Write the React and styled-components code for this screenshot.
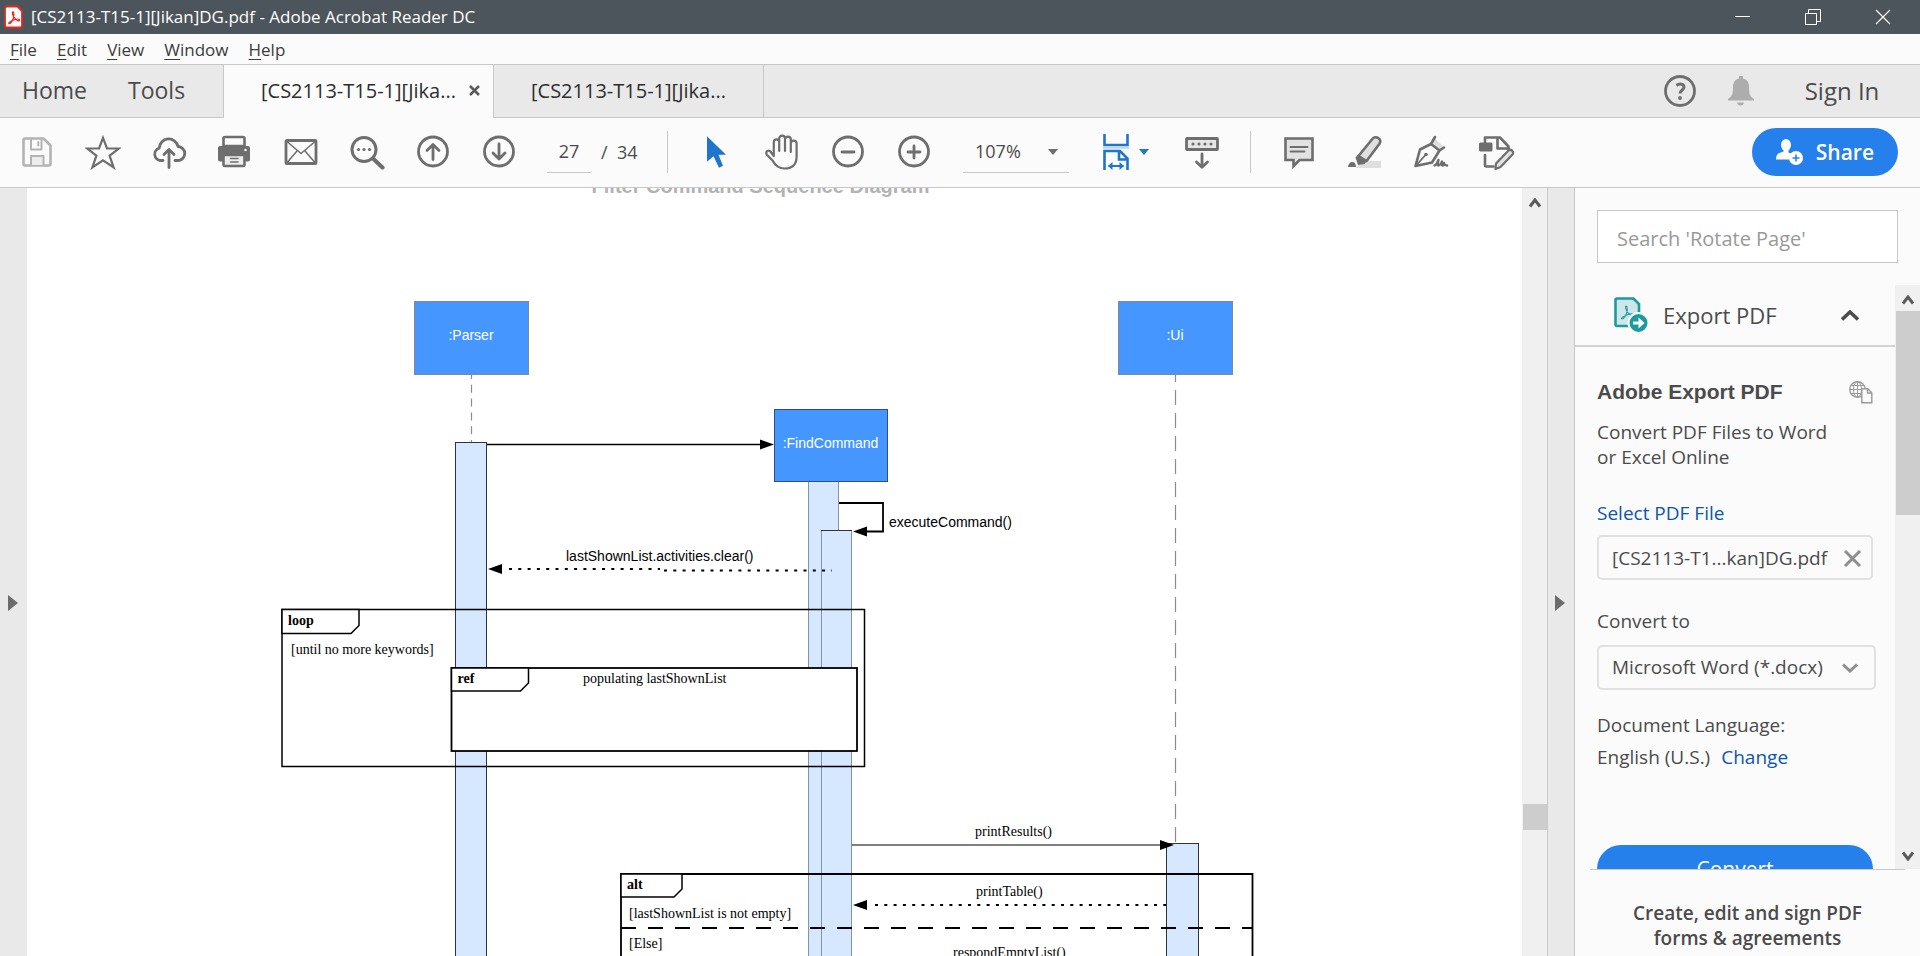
import React from "react";
import styled, { createGlobalStyle } from "styled-components";

const UI_FONT = '"Open Sans", "Noto Sans", sans-serif';
const ARIAL = '"Liberation Sans", Arial, sans-serif';
const TIMES = '"Liberation Serif", "Times New Roman", serif';

const GlobalStyle = createGlobalStyle`
  *, *::before, *::after { box-sizing: border-box; }
  html, body { margin: 0; height: 100%; overflow: hidden; }
  body { font-family: ${UI_FONT}; color: #4b4b4b; background: #fbfbfb; }
  button, input, select {
    font: inherit; color: inherit; margin: 0; padding: 0;
    border: 0; border-radius: 0; background: none; outline: none;
  }
  a { color: #0d55ae; text-decoration: none; }
  svg { display: block; flex: none; }
`;

const Window = styled.div`
  display: flex;
  flex-direction: column;
  height: 100vh;
  overflow: hidden;
`;

/* ---------- title bar ---------- */

const TitleBar = styled.header`
  display: flex;
  align-items: center;
  flex: none;
  height: 34px;
  padding: 0 2px 0 4px;
  background: #4c555b;
  color: #fff;
`;

const WindowTitle = styled.h1`
  flex: 1;
  margin: 0 0 0 8px;
  font-size: 17px;
  line-height: 24px;
  font-weight: 400;
  white-space: nowrap;
`;

const WindowButton = styled.button`
  display: flex;
  justify-content: center;
  align-items: center;
  width: 70px;
  height: 34px;
`;

/* ---------- menu bar ---------- */

const MenuBar = styled.nav`
  display: flex;
  align-items: center;
  flex: none;
  gap: 20px;
  height: 31px;
  padding: 2px 0 0 10px;
  border-bottom: 1px solid #c8c8c8;
`;

const MenuItem = styled.button`
  font-size: 17px;
  line-height: 24px;
  color: #3c3c3c;
  &::first-letter {
    text-decoration: underline;
    text-underline-offset: 3px;
  }
`;

/* ---------- document tabs ---------- */

const TabBar = styled.div`
  display: flex;
  flex: none;
  height: 53px;
  background: #e9e9e9;
  box-shadow: inset 0 -1px #c8c8c8;
`;

const HomeTabs = styled.nav`
  display: flex;
  align-items: center;
  gap: 41px;
  width: 224px;
  padding: 0 0 4px 22px;
  border-right: 1px solid #c8c8c8;
`;

const HomeTab = styled.button`
  font-size: 23px;
  line-height: 30px;
`;

const DocTab = styled.div`
  display: flex;
  align-items: center;
  gap: 13px;
  width: 270px;
  padding: 0 0 2px 37px;
  border-right: 1px solid #c8c8c8;
  background: ${(p) => (p.$active ? "#fbfbfb" : "transparent")};
`;

const DocTabName = styled.button`
  font-size: 20px;
  line-height: 28px;
  color: #2d2d2d;
  white-space: nowrap;
`;

const AccountArea = styled.div`
  display: flex;
  align-items: center;
  gap: 30px;
  margin-left: auto;
  padding: 0 38px 2px 0;
`;

const SignIn = styled.button`
  min-width: 80px;
  margin-left: 18px;
  font-size: 24px;
  line-height: 30px;
  font-weight: 500;
  white-space: nowrap;
`;

/* ---------- toolbar ---------- */

const Toolbar = styled.div`
  display: flex;
  align-items: center;
  flex: none;
  height: 70px;
  padding: 0 22px 2px 4px;
  border-bottom: 1px solid #c8c8c8;
`;

const ToolGroup = styled.div`
  display: flex;
  align-items: center;
`;

const ToolButton = styled.button`
  display: flex;
  justify-content: center;
  align-items: center;
  width: 66px;
  height: 48px;
`;

const PageBox = styled.label`
  display: flex;
  align-items: center;
  height: 42px;
  margin-left: 15px;
  font-size: 18px;
  line-height: 24px;
`;

const PageInput = styled.input`
  width: 44px;
  height: 42px;
  margin-right: 10px;
  border-bottom: 1px solid #c8c8c8;
  text-align: center;
`;

const PageTotal = styled.span`
  width: 51px;
  white-space: pre;
`;

const Divider = styled.span`
  width: 1px;
  height: 42px;
  margin: 0 15px;
  background: #c8c8c8;
`;

const SelectWrap = styled.div`
  display: grid;
  align-items: center;
  > * { grid-area: 1 / 1; }
  > svg { justify-self: end; pointer-events: none; margin-right: ${(p) => p.$inset}px; }
`;

const ZoomSelect = styled.select`
  appearance: none;
  width: 106px;
  height: 42px;
  padding-left: 12px;
  border-bottom: 1px solid #c8c8c8;
  font-size: 18px;
`;

const ZoomWrap = styled(SelectWrap)`
  margin: 0 34px 0 16px;
`;

const FitButton = styled(ToolButton)`
  justify-content: flex-start;
  gap: 10px;
  width: 66px;
`;

const ShareButton = styled.button`
  display: flex;
  align-items: center;
  gap: 13px;
  height: 48px;
  margin-left: auto;
  padding: 0 24px;
  border-radius: 24px;
  background: #2680eb;
  color: #fff;
  font-size: 21px;
  line-height: 28px;
  font-weight: 600;
`;

/* ---------- workspace ---------- */

const Workspace = styled.main`
  display: flex;
  flex: 1;
  min-height: 0;
`;

const SideHandle = styled.button`
  display: flex;
  align-items: center;
  justify-content: center;
  flex: none;
  width: 27px;
  padding: 62px 2px 0 0;
  background: #e9e9e9;
  ${(p) =>
    p.$bordered &&
    "width: 28px; border-left: 1px solid #c8c8c8; border-right: 1px solid #c8c8c8;"}
`;

const DocumentView = styled.section`
  display: flex;
  flex-direction: column;
  align-items: center;
  flex: 1;
  min-width: 0;
  padding-right: 28px;
  overflow: hidden;
  background: #fff;
`;

const PageHeading = styled.h2`
  flex: none;
  margin: -14px 0 0;
  font: 700 20px/24px ${ARIAL};
  color: #b3b3b3;
`;

const ScrollTrack = styled.div`
  display: flex;
  flex-direction: column;
  align-items: center;
  justify-content: space-between;
  flex: none;
  width: 25px;
  padding: 10px 0 8px;
  background: #f0f0f0;
`;

const ScrollThumb = styled.span`
  width: 24px;
  height: ${(p) => p.$size}px;
  margin-top: ${(p) => p.$offset}px;
  margin-bottom: auto;
  background: #cdcdcd;
`;

/* ---------- tools panel ---------- */

const Panel = styled.aside`
  display: flex;
  flex-direction: column;
  flex: none;
  width: 345px;
`;

const SearchInput = styled.input`
  flex: none;
  height: 53px;
  margin: 22px 22px;
  padding: 4px 19px 0;
  border: 1px solid #c8c8c8;
  background: #fff;
  font-size: 20px;
  &::placeholder { color: #999; opacity: 1; }
`;

const PanelScroller = styled.div`
  display: flex;
  flex: 1;
  min-height: 0;
  overflow: hidden;
`;

const PanelContent = styled.div`
  flex: 1;
  min-width: 0;
`;

const SectionHeader = styled.button`
  display: flex;
  align-items: center;
  width: 100%;
  height: 62px;
  padding: 0 36px 0 39px;
  border-bottom: 2px solid #d3d3d3;
  text-align: left;
`;

const SectionTitle = styled.span`
  flex: 1;
  margin-left: 15px;
  font-size: 22px;
  line-height: 30px;
`;

const ExportForm = styled.form`
  display: flex;
  flex-direction: column;
  padding: 31px 22px 0 22px;
  font-size: 19px;
  line-height: 25px;
`;

const FormTitle = styled.h3`
  display: flex;
  justify-content: space-between;
  align-items: center;
  margin: 0 0 14px;
  font: 700 21px/28px ${ARIAL};
`;

const Paragraph = styled.p`
  margin: 0 0 31px;
`;

const FieldBox = styled.div`
  display: flex;
  justify-content: space-between;
  align-items: center;
  height: 45px;
  margin: 9px 0 29px;
  padding: 1px 10px 0 13px;
  border: 2px solid #e1e1e1;
  border-radius: 5px;
`;

const IconButton = styled.button`
  display: flex;
`;

const FormatWrap = styled(SelectWrap)`
  margin: 11px -3px 23px 0;
`;

const FormatSelect = styled.select`
  appearance: none;
  width: 100%;
  height: 45px;
  padding-left: 13px;
  border: 2px solid #e1e1e1;
  border-radius: 5px;
`;

const LanguageRow = styled.div`
  display: flex;
  gap: 11px;
  margin: 7px 0 75px;
`;

const ConvertButton = styled.button`
  height: 48px;
  border-radius: 24px;
  background: #2680eb;
  color: #fff;
  font-size: 21px;
`;

const PanelFooter = styled.p`
  flex: none;
  height: 87px;
  margin: 0 15px;
  padding-top: 31px;
  border-top: 1px solid #c8c8c8;
  text-align: center;
  font-size: 19px;
  line-height: 25px;
  font-weight: 600;
`;

/* ---------- icons ---------- */

const GREY = "#6e6e6e";
const BLUE = "#1f75cb";

const Icon = ({ size = 36, color = GREY, width = 3, children }) => (
  <svg width={size} height={size} viewBox={`0 0 ${size} ${size}`} fill="none" stroke={color}
    strokeWidth={width} strokeLinejoin="round" strokeLinecap="round" aria-hidden="true">
    {children}
  </svg>
);

const SaveIcon = () => (
  <Icon color="#b3b3b3" width={2.6}>
    <path d="M4.5 6q0-1.5 1.5-1.5h18.5l7 7V30q0 1.500-1.500 1.500H6Q4.500 31.500 4.500 30z" />
    <path d="M12 5v10.500h10.500V5M19.300 8v3.500" strokeWidth="2" />
    <path d="M12 31v-9h12.500v9" fill="#ececec" strokeWidth="2" />
  </Icon>
);
const StarIcon = () => (
  <Icon width={2.2}>
    <path strokeLinejoin="miter" d="M18 3.800l4 10.700h11.800l-9.200 7.200 4 11.700L18 26.400 7.400 33.400l4-11.700L2.200 14.500H14z" />
  </Icon>
);
const CloudIcon = () => (
  <Icon width={2.8}>
    <path d="M12 26.500H9.500A6.300 6.300 0 0 1 8.200 14.200 9.500 9.500 0 0 1 27 12.500a7 7 0 0 1-.5 14H24" />
    <path d="M18 33.500V17M13 20.500l5-5 5 5" />
  </Icon>
);
const PrintIcon = () => (
  <Icon width={2.6}>
    <g transform="translate(-1)">
      <rect x="2" y="12" width="32" height="15.500" rx="2" fill={GREY} stroke="none" />
      <path d="M7.500 12V4.500q0-1.500 1.500-1.500h18q1.500 0 1.500 1.500V12z" fill="#fbfbfb" />
      <path d="M7.500 21h21v9.500q0 1.500-1.500 1.500H9q-1.500 0-1.500-1.500z" fill="#ededed" />
      <path d="M14.500 24.500h7.500M14.500 28h7.500" strokeWidth="1.500" />
      <circle cx="29.500" cy="16" r="1.200" fill="#fff" stroke="none" />
    </g>
  </Icon>
);
const MailIcon = () => (
  <Icon width={2.8}>
    <rect x="3" y="6.500" width="30" height="23" rx=".8" />
    <path d="M4.500 8L18 19.500 31.500 8M4.500 28l9.500-11M31.500 28L22 17" strokeWidth="1.500" />
  </Icon>
);
const FindIcon = () => (
  <Icon width={3}>
    <circle cx="15" cy="15.500" r="12" />
    <path d="M24 24.500l9.500 9" strokeWidth="4" />
    {[9.5, 15, 20.5].map((x) => (
      <circle key={x} cx={x} cy="15.500" r="1.600" fill={GREY} stroke="none" />
    ))}
  </Icon>
);
const Ring = ({ children }) => (
  <Icon width={2.8}>
    <circle cx="18" cy="17.500" r="14.500" />
    {children}
  </Icon>
);
const UpIcon = () => <Ring><path d="M18 25.500V11M12 16.500l6-6 6 6" /></Ring>;
const DownIcon = () => <Ring><path d="M18 10v14.500M12 19l6 6 6-6" /></Ring>;
const MinusIcon = () => <Ring><path d="M12 18h12" /></Ring>;
const PlusIcon = () => <Ring><path d="M12 18h12M18 12v12" /></Ring>;
const CursorIcon = () => (
  <Icon color="none"><path fill={BLUE} d="M9 2.200v25.500l6.500-5.500 5.500 11.500 4-2-4.500-11H28z" /></Icon>
);
const HandIcon = () => (
  <Icon width={2.2}>
    <path d="M9.800 22V8a2.700 2.700 0 0 1 5.400 0v9M15.200 17V4.500a2.900 2.900 0 0 1 5.800 0V17M21 17V5.500a2.900 2.900 0 0 1 5.800 0V18M26.800 18V9.500a2.900 2.900 0 0 1 5.800 0v13c0 8-4.500 12-12 12-6.500 0-9.500-3-12-8L2.600 20.500c-1.300-3.500 2-5 4.200-2.500l3 4" />
  </Icon>
);
const FitIcon = () => (
  <svg width="26" height="36" viewBox="0 0 26 36" fill="none" stroke={BLUE} strokeWidth="2.600" aria-hidden="true">
    <path d="M1.500 0v11h23V0" />
    <path d="M0 13.800h26" stroke="#bcd5ef" strokeWidth="1.800" />
    <path d="M1.500 36V17H17l7.500 7.500V36M16 17v8.500h8.500" />
    <path d="M5.500 32h15" strokeWidth="2" />
    <path d="M9.500 28v8L5 32zM16.500 28v8l4.500-4z" fill={BLUE} stroke="none" />
  </svg>
);
const Caret = ({ color = GREY }) => (
  <svg width="10" height="6" viewBox="0 0 10 6" fill={color} aria-hidden="true"><path d="M0 0h10L5 6z" /></svg>
);
const KeyboardIcon = () => (
  <Icon width={2.8}>
    <rect x="2.500" y="4.500" width="31" height="11" rx=".6" fill="#e6e6e6" />
    {[9, 15, 21, 27].map((x) => (
      <circle key={x} cx={x} cy="10" r="1.600" fill={GREY} stroke="none" />
    ))}
    <path d="M18 20v13M12.500 28l5.500 5.300 5.500-5.300" />
  </Icon>
);
const CommentIcon = () => (
  <Icon width={2.6}>
    <path fill="#e2e2e2" strokeLinejoin="miter" d="M4.500 4.500h27V26H18.500l-6 6v-6h-8z" />
    <path d="M9.500 13h17M9.500 17.500h14" strokeWidth="1.800" />
  </Icon>
);
const HighlightIcon = () => (
  <Icon width={2.6}>
    <path d="M8.500 34l7.500-7h18v7z" fill="#dfdfdf" stroke="none" />
    <path d="M11.500 22L25.500 4.800c2.500-3.500 10-.5 7 5L19.500 27z" fill="#dfdfdf" />
    <path d="M8.500 23.500l2.500-3 9 6.500-2.500 3-6.500 1z" fill={GREY} stroke="none" />
    <path d="M1 33q1-5 4-5 4 0 4 5z" fill={GREY} stroke="none" />
  </Icon>
);
const SignIcon = () => (
  <Icon width={2.6}>
    <path d="M21.500 4l9 8.500-4 3-7.500-7z" fill="#dfdfdf" stroke="none" />
    <path d="M22 3l-4 7 8.500 6.500 4.500-3M18 10L7 15.500 2.500 32 19 28.500l7.500-12" />
    <path d="M3.500 31l9-10" strokeWidth="1.800" />
    <circle cx="13" cy="20.500" r="1.800" fill={GREY} stroke="none" />
    <path d="M21.500 31.500c2.500-1 4-5.500 4-5.500s-1.500 5.500 0 5.500 3.500-4 3.500-4-1 4 .5 4 1.500-2.500 1.500-2.500 0 2.500 3 2.500" strokeWidth="2.400" />
  </Icon>
);
const EditPageIcon = () => (
  <Icon width={2.6}>
    <path d="M6 8.500V3.500h15l8.500 9V15M18.500 3.500v11h11M6 21v10q0 1.500 1.500 1.500h7" />
    <rect x="0" y="8.500" width="13.500" height="9" rx="1.500" fill={GREY} stroke="none" />
    <path d="M17 29.500L29.500 16.500c2-2 6 1 4 4L21.500 33l-5 2z" fill="#e2e2e2" strokeWidth="2.200" />
  </Icon>
);
const PersonIcon = () => (
  <svg width="27" height="26" viewBox="0 0 27 26" fill="#fff" aria-hidden="true">
    <ellipse cx="10" cy="6" rx="5" ry="6" />
    <path d="M7.500 9h5v4.500l3.500 1.500a8 8 0 0 0-2.500 5.500H0q0-5.500 3.500-6.500l4-1.500z" />
    <circle cx="20" cy="19" r="7" />
    <path d="M20 15.500v7M16.500 19h7" stroke="#2680eb" strokeWidth="1.600" />
  </svg>
);
const BellIcon = () => (
  <svg width="26" height="30" viewBox="0 0 26 30" fill="#adadad" aria-hidden="true">
    <path d="M11 0h4v2.500c4 .8 6 4 6 8.500 0 7 1 9.500 5 12v1.500H0V23c4-2.500 5-5 5-12 0-4.500 2-7.700 6-8.500zM9 26.500h7q-.5 3-3.500 3T9 26.500z" />
  </svg>
);
const HelpIcon = () => (
  <Icon width={2.8}>
    <circle cx="18" cy="18" r="14.500" />
    <path d="M14.500 12.500c3-2.500 7.500-1.500 7.500 1.500 0 3.500-4 3-4 6.500" strokeWidth="3" strokeLinecap="butt" />
    <circle cx="18" cy="25" r="1.900" fill={GREY} stroke="none" />
  </Icon>
);
const Cross = ({ size, color, width }) => (
  <Icon size={size} color={color} width={width}>
    <path strokeLinecap="butt" d={`M1 1L${size - 1} ${size - 1}M${size - 1} 1L1 ${size - 1}`} />
  </Icon>
);
const Chevron = ({ w, h, color = "#4b4b4b", width = 3, down }) => (
  <svg width={w} height={h} viewBox={`0 0 ${w} ${h}`} fill="none" stroke={color} strokeWidth={width} aria-hidden="true">
    <path d={down ? `M1 1.500L${w / 2} ${h - 2}L${w - 1} 1.500` : `M1 ${h - 1.5}L${w / 2} 2L${w - 1} ${h - 1.5}`} />
  </svg>
);
const Triangle = () => (
  <svg width="10" height="16" viewBox="0 0 10 16" fill="#6b6b6b" aria-hidden="true"><path d="M0 0l10 8-10 8z" /></svg>
);
const Trefoil = () => (
  <path d="M4.500 13c-3.500 1-3.500 4-1 2.500C7 13 9 5.500 8 2.500 7.500 0 5.500 1 6.500 4c1 4 5 8 7.500 8.300 2.500 0 1.500-2.500-1.500-2.300C9.500 10 6.500 12 4.500 13z" />
);
const AcrobatIcon = () => (
  <svg width="19" height="24" viewBox="0 0 19 24" fill="none" aria-hidden="true">
    <path d="M1 3.500Q1 1.500 3 1.500h10.500l4.500 4.500v14.500q0 2-2 2H3q-2 0-2-2z" fill="#fff" stroke="#e8261c" strokeWidth="1.800" />
    <g transform="translate(3.300 6) scale(.8)" stroke="#e8261c" strokeWidth="1.500"><Trefoil /></g>
  </svg>
);
const ExportIcon = () => (
  <svg width="34" height="36" viewBox="0 0 34 36" fill="none" aria-hidden="true">
    <path d="M1.500 3Q1.500 1.500 3 1.500h16.500l5.500 5.500v22H3q-1.500 0-1.500-1.500z" fill="#cde6e8" stroke="#1d9a9f" strokeWidth="2.600" />
    <g transform="translate(6 8) scale(.88)" stroke="#1d9a9f" strokeWidth="1.200"><Trefoil /></g>
    <circle cx="24.500" cy="26" r="10" fill="#1d9a9f" stroke="#fafafa" strokeWidth="2" />
    <path d="M19 24.500h5.500v-4l6 5.500-6 5.500v-4H19z" fill="#fff" />
  </svg>
);
const GlobePageIcon = () => (
  <svg width="24" height="23" viewBox="0 0 24 23" fill="none" stroke="#9a9a9a" strokeWidth="1.400" aria-hidden="true">
    <circle cx="8.500" cy="8.500" r="7.700" />
    <path d="M8.500 1v15M1 8.500h15M2.500 4.500h12M2.500 12.500h12" strokeWidth="1" />
    <ellipse cx="8.500" cy="8.500" rx="4" ry="7.700" strokeWidth="1" />
    <path d="M12.800 7.800h6l4 4v10h-10z" fill="#fbfbfb" />
    <path d="M18.500 8v4H22.500" />
  </svg>
);
const MinimizeIcon = () => (
  <svg width="16" height="16" stroke="#fff" aria-hidden="true"><path d="M0 7.500h15" /></svg>
);
const RestoreIcon = () => (
  <svg width="16" height="16" fill="none" stroke="#fff" aria-hidden="true">
    <path d="M.5 4.500h11v11H.5zM3.500 4V.5h12v12H12" />
  </svg>
);

/* ---------- sequence diagram ---------- */

const Sequence = styled.svg`
  text { font-size: 14px; fill: #000; }
  .arial { font-family: ${ARIAL}; }
  .times { font-family: ${TIMES}; }
  .bold { font-weight: 700; }
  .label { fill: #fff; text-anchor: middle; }
`;

const Participant = ({ x, y, w = 114, h = 73, name, stroke = "#7f8a99" }) => (
  <g>
    <rect x={x + 0.5} y={y + 0.5} width={w} height={h} fill="#4596ff" stroke={stroke} />
    <text className="arial label" x={x + w / 2} y={y + 39}>{name}</text>
  </g>
);
const Activation = ({ x, y, w, stroke = "#333" }) => (
  <rect x={x + 0.5} y={y + 0.5} width={w} height={980 - y} fill="#d6e8ff" stroke={stroke} />
);
const Head = ({ x, y, left }) => (
  <path d={left ? `M${x} ${y}l14-5v10z` : `M${x} ${y}l-14-5v10z`} />
);
const FrameTag = ({ x, y, w, h, name }) => (
  <g>
    <path d={`M${x} ${y + h}h${w - 8}l8-8V${y}H${x}z`} fill="#fff" stroke="#000" strokeWidth="1.500" />
    <text className="times bold" x={x + 6} y={y + 15}>{name}</text>
  </g>
);

const SequenceDiagram = () => (
  <Sequence width="990" height="782" viewBox="266 198 990 782" role="img" aria-label="Filter command sequence diagram">
    <g stroke="#8c8c8c" strokeWidth="1.200">
      <path d="M471.500 375v67" strokeDasharray="8 5.800" strokeDashoffset="4" />
      <path d="M1175.500 375v468" strokeDasharray="15 8" strokeDashoffset="8" />
    </g>
    <Participant x={414} y={301} name=":Parser" />
    <Participant x={1118} y={301} name=":Ui" />
    <Activation x={455} y={442} w={31} />
    <Activation x={808} y={481} w={30} stroke="#8593a3" />
    <Activation x={821} y={530} w={30} stroke="#8593a3" />
    <path d="M821 530.500h31" stroke="#333" />
    <Participant x={774} y={409} w={113} h={72} name=":FindCommand" stroke="#2b4f86" />
    <Activation x={1166} y={843} w={32} />

    <path d="M487 444.500h274" stroke="#000" strokeWidth="1.300" />
    <Head x={774} y={444.5} />
    <path d="M839 503h44v28.500h-17" fill="none" stroke="#000" strokeWidth="1.800" />
    <Head x={853} y={531.5} left />
    <text className="arial" x="889" y="527">executeCommand()</text>

    <path d="M509 569h151M664 570.500h168" stroke="#000" strokeWidth="1.800" strokeDasharray="3 6.300" />
    <Head x={488} y={569} left />
    <text className="arial" x="566" y="561">lastShownList.activities.clear()</text>

    <rect x="282" y="609.500" width="582.500" height="157" fill="none" stroke="#000" strokeWidth="1.500" />
    <FrameTag x={282} y={609.5} w={77} h={24} name="loop" />
    <text className="times" x="291" y="654">[until no more keywords]</text>
    <rect x="451.500" y="668" width="405.500" height="83" fill="#fff" stroke="#000" strokeWidth="1.800" />
    <FrameTag x={451.5} y={668} w={77} h={23} name="ref" />
    <text className="times" x="583" y="683">populating lastShownList</text>

    <path d="M852 845h310" stroke="#7f7f7f" strokeWidth="2" />
    <Head x={1174} y={845} />
    <text className="times" x="975" y="836">printResults()</text>

    <path d="M621 980V874h631.500v106" fill="none" stroke="#000" strokeWidth="1.800" />
    <FrameTag x={621} y={874} w={61} h={23} name="alt" />
    <text className="times" x="629" y="918">[lastShownList is not empty]</text>
    <path d="M621 928h631" stroke="#000" strokeWidth="1.800" strokeDasharray="15 12" />
    <text className="times" x="629" y="948">[Else]</text>
    <path d="M875 905h291" stroke="#000" strokeWidth="1.800" strokeDasharray="3 6.300" />
    <Head x={853} y={905} left />
    <text className="times" x="976" y="896">printTable()</text>
    <text className="times" x="953" y="957">respondEmptyList()</text>
  </Sequence>
);

const fileTools = [
  ["Save", SaveIcon], ["Star", StarIcon], ["Upload", CloudIcon], ["Print", PrintIcon],
  ["Email", MailIcon], ["Find", FindIcon], ["Previous page", UpIcon], ["Next page", DownIcon],
];
const viewTools = [["Select", CursorIcon], ["Hand", HandIcon], ["Zoom out", MinusIcon], ["Zoom in", PlusIcon]];
const markupTools = [["Comment", CommentIcon], ["Highlight", HighlightIcon], ["Sign", SignIcon], ["Edit", EditPageIcon]];

const Tools = ({ items }) => (
  <ToolGroup>
    {items.map(([name, Glyph]) => (
      <ToolButton key={name} type="button" aria-label={name}><Glyph /></ToolButton>
    ))}
  </ToolGroup>
);

export default function App() {
  return (
    <Window>
      <GlobalStyle />
      <TitleBar>
        <AcrobatIcon />
        <WindowTitle>[CS2113-T15-1][Jikan]DG.pdf - Adobe Acrobat Reader DC</WindowTitle>
        <WindowButton aria-label="Minimize"><MinimizeIcon /></WindowButton>
        <WindowButton aria-label="Restore"><RestoreIcon /></WindowButton>
        <WindowButton aria-label="Close"><Cross size={16} color="#fff" width={1.2} /></WindowButton>
      </TitleBar>

      <MenuBar>
        {["File", "Edit", "View", "Window", "Help"].map((m) => <MenuItem key={m}>{m}</MenuItem>)}
      </MenuBar>

      <TabBar>
        <HomeTabs>
          <HomeTab>Home</HomeTab>
          <HomeTab>Tools</HomeTab>
        </HomeTabs>
        <DocTab $active>
          <DocTabName>[CS2113-T15-1][Jika...</DocTabName>
          <IconButton aria-label="Close tab"><Cross size={11} color="#5a5a5a" width={2.5} /></IconButton>
        </DocTab>
        <DocTab>
          <DocTabName>[CS2113-T15-1][Jika...</DocTabName>
        </DocTab>
        <AccountArea>
          <IconButton aria-label="Help"><HelpIcon /></IconButton>
          <IconButton aria-label="Notifications"><BellIcon /></IconButton>
          <SignIn>Sign In</SignIn>
        </AccountArea>
      </TabBar>

      <Toolbar>
        <Tools items={fileTools} />
        <PageBox>
          <PageInput aria-label="Page number" defaultValue="27" />
          <PageTotal>/  34</PageTotal>
        </PageBox>
        <Divider />
        <Tools items={viewTools} />
        <ZoomWrap $inset={11}>
          <ZoomSelect aria-label="Zoom level"><option>107%</option></ZoomSelect>
          <Caret />
        </ZoomWrap>
        <FitButton aria-label="Page fit"><FitIcon /><Caret color={BLUE} /></FitButton>
        <ToolButton aria-label="Show keyboard"><KeyboardIcon /></ToolButton>
        <Divider />
        <Tools items={markupTools} />
        <ShareButton><PersonIcon />Share</ShareButton>
      </Toolbar>

      <Workspace>
        <SideHandle aria-label="Open navigation pane"><Triangle /></SideHandle>
        <DocumentView>
          <PageHeading>Filter Command Sequence Diagram</PageHeading>
          <SequenceDiagram />
        </DocumentView>
        <ScrollTrack>
          <Chevron w={12} h={10} color="#5a5a5a" />
          <ScrollThumb $offset={596} $size={26} />
        </ScrollTrack>
        <SideHandle $bordered aria-label="Collapse tools pane"><Triangle /></SideHandle>

        <Panel>
          <SearchInput aria-label="Search tools" placeholder="Search 'Rotate Page'" />
          <PanelScroller>
            <PanelContent>
              <SectionHeader type="button">
                <ExportIcon />
                <SectionTitle>Export PDF</SectionTitle>
                <Chevron w={18} h={11} width={3.5} />
              </SectionHeader>
              <ExportForm>
                <FormTitle>Adobe Export PDF <GlobePageIcon /></FormTitle>
                <Paragraph>Convert PDF Files to Word<br />or Excel Online</Paragraph>
                <a href="#select">Select PDF File</a>
                <FieldBox>
                  [CS2113-T1...kan]DG.pdf
                  <IconButton type="button" aria-label="Remove file"><Cross size={17} color="#8e8e8e" width={3} /></IconButton>
                </FieldBox>
                <label htmlFor="format">Convert to</label>
                <FormatWrap $inset={18}>
                  <FormatSelect id="format"><option>Microsoft Word (*.docx)</option></FormatSelect>
                  <Chevron w={16} h={10} color="#8e8e8e" down />
                </FormatWrap>
                <span>Document Language:</span>
                <LanguageRow>English (U.S.) <a href="#language">Change</a></LanguageRow>
                <ConvertButton type="button">Convert</ConvertButton>
              </ExportForm>
            </PanelContent>
            <ScrollTrack>
              <Chevron w={12} h={10} color="#5a5a5a" />
              <ScrollThumb $offset={6} $size={204} />
              <Chevron w={12} h={10} color="#5a5a5a" down />
            </ScrollTrack>
          </PanelScroller>
          <PanelFooter>Create, edit and sign PDF<br />forms &amp; agreements</PanelFooter>
        </Panel>
      </Workspace>
    </Window>
  );
}
